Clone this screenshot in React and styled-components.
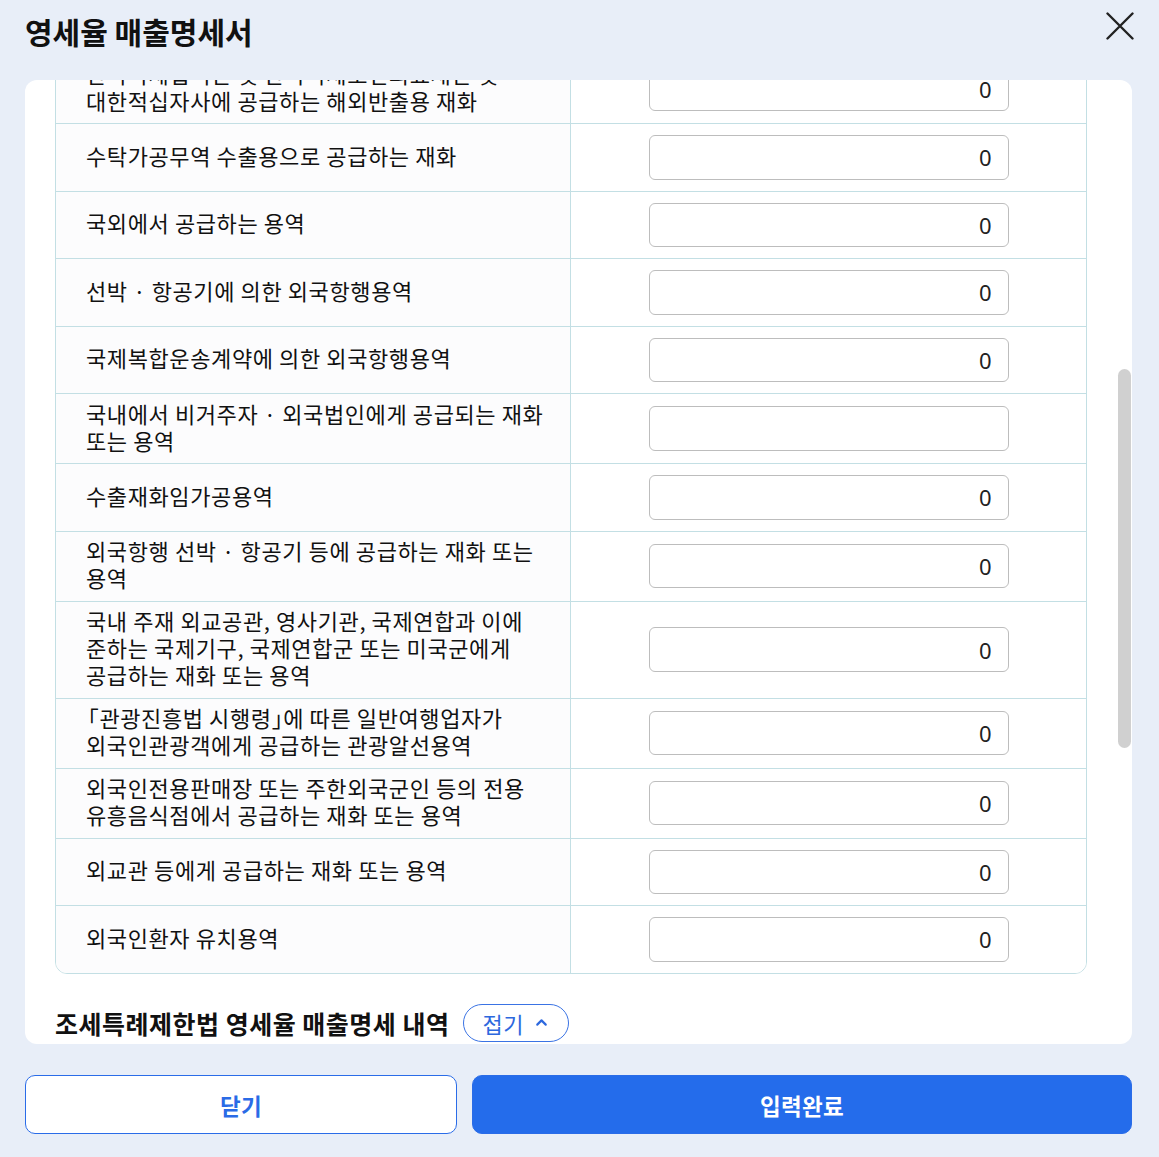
import React, { useLayoutEffect, useRef, useState } from "react";
import styled, { createGlobalStyle } from "styled-components";
import { ChevronUp } from "lucide-react";

const GlobalStyle = createGlobalStyle`
  html, body {
    margin: 0;
    padding: 0;
    height: 100%;
  }
  body {
    background: #e8eef8;
    font-family: "Noto Sans CJK KR", "Noto Sans", sans-serif;
    color: #111;
  }
  * {
    box-sizing: border-box;
  }
`;

const Page = styled.div`
  display: flex;
  flex-direction: column;
  height: 100vh;
`;

const Header = styled.header`
  flex-shrink: 0;
  height: 80px;
  display: flex;
  justify-content: space-between;
  align-items: flex-start;
  padding: 9px 25px 0 25px;
`;

const Title = styled.h1`
  margin: 0;
  font-size: 30px;
  line-height: 44px;
  font-weight: 700;
  color: #111;
`;

const CloseButton = styled.button`
  width: 28px;
  height: 28px;
  margin-top: 3px;
  padding: 0;
  border: none;
  background: none;
  cursor: pointer;
`;

const Panel = styled.main`
  position: relative;
  flex: 1;
  min-height: 0;
  margin: 0 27px 0 25px;
  background: #fff;
  border-radius: 12px;
  overflow: hidden;
`;

const Scroller = styled.div`
  height: 100%;
  overflow-y: auto;
  padding: 30px 45px 53px 30px;
  scrollbar-width: none;
  &::-webkit-scrollbar {
    display: none;
  }
`;

const Thumb = styled.div`
  position: absolute;
  right: 1px;
  width: 13px;
  border-radius: 7px;
  background: #d0d0d0;
`;

const Notice = styled.div`
  margin-bottom: 32px;
  padding: 31px 24px;
  border-radius: 10px;
  background: #f4f6fa;
  font-size: 19px;
  line-height: 28px;
  color: #555;
`;

const Section = styled.section`
  & + & {
    margin-top: 30px;
  }
`;

const SectionHead = styled.div`
  display: flex;
  align-items: center;
  gap: 13px;
  height: 38px;
  margin-bottom: 16px;
`;

const SectionTitle = styled.h2`
  margin: 0;
  font-size: 25px;
  letter-spacing: 0.5px;
  font-weight: 700;
  color: #111;
`;

const FoldButton = styled.button`
  display: inline-flex;
  align-items: center;
  gap: 9px;
  height: 38px;
  padding: 0 18px 0 19px;
  border: 1px solid #3a73e4;
  border-radius: 19px;
  background: #fff;
  color: #2d68de;
  font-family: inherit;
  font-size: 22px;
  letter-spacing: 0.5px;
  cursor: pointer;
`;

const Table = styled.div`
  border: 1px solid #c3dfe4;
  border-radius: 12px;
  overflow: hidden;
`;

const Row = styled.div`
  display: grid;
  grid-template-columns: 515px 1fr;
  & + & {
    border-top: 1px solid #c3dfe4;
  }
`;

const Label = styled.div`
  display: flex;
  align-items: center;
  padding: 5.5px 22px 9.5px 30px;
  border-right: 1px solid #c3dfe4;
  background: ${(p) => (p.$head ? "#f3f8f9" : "#fcfcfd")};
  font-size: 22px;
  letter-spacing: 0.6px;
  line-height: 27px;
  font-weight: ${(p) => (p.$head ? 700 : 400)};
  word-break: keep-all;
  color: #111;
`;

const LabelText = styled.span`
  display: block;
`;

const Bracket = styled.span`
  margin-left: ${(p) => (p.$open ? "-0.42em" : "0")};
  margin-right: ${(p) => (p.$open ? "0" : "-0.5em")};
`;

const ValueCell = styled.div`
  display: flex;
  align-items: center;
  justify-content: center;
  padding: ${(p) => (p.$head ? "7.5px 0" : "11px 0")};
  font-size: 22px;
  line-height: 27px;
  font-weight: 700;
  background: ${(p) => (p.$head ? "#f3f8f9" : "#fff")};
`;

const AmountInput = styled.input`
  width: 360px;
  height: 44.5px;
  padding: 0 16px;
  border: 1px solid #bdbdbd;
  border-radius: 6px;
  background: #fff;
  text-align: right;
  font-family: "Noto Sans", sans-serif;
  font-size: 22px;
  color: #222;
  outline: none;
`;

const Footer = styled.footer`
  flex-shrink: 0;
  display: grid;
  grid-template-columns: 432px 1fr;
  gap: 15px;
  padding: 31px 27px 23px 25px;
`;

const ActionButton = styled.button`
  height: 59px;
  border-radius: 10px;
  border: 1px solid #2a6ce8;
  background: ${(p) => (p.$primary ? "#246ceb" : "#fff")};
  color: ${(p) => (p.$primary ? "#fff" : "#2a6be6")};
  font-family: inherit;
  font-size: 22.5px;
  letter-spacing: 0.3px;
  font-weight: 700;
  cursor: pointer;
`;

const totals = [
  "「부가가치세법」에 따른 영세율 적용 공급실적 합계",
  "「조세특례제한법」에 따른 영세율 적용 공급실적 합계",
];

const vatRows = [
  { label: "직접수출(대행수출 포함)", value: "0" },
  { label: "중계무역 · 위탁판매 · 외국인도 또는 위탁가공무역 방식의 수출", value: "0" },
  { label: "내국신용장 · 구매확인서에 의하여 공급하는 재화", value: "0" },
  { label: "한국국제협력단 및 한국국제보건의료재단 및 대한적십자사에 공급하는 해외반출용 재화", value: "0" },
  { label: "수탁가공무역 수출용으로 공급하는 재화", value: "0", anchor: true },
  { label: "국외에서 공급하는 용역", value: "0" },
  { label: "선박 · 항공기에 의한 외국항행용역", value: "0" },
  { label: "국제복합운송계약에 의한 외국항행용역", value: "0" },
  { label: "국내에서 비거주자 · 외국법인에게 공급되는 재화 또는 용역", value: "" },
  { label: "수출재화임가공용역", value: "0" },
  { label: "외국항행 선박 · 항공기 등에 공급하는 재화 또는 용역", value: "0" },
  { label: "국내 주재 외교공관, 영사기관, 국제연합과 이에 준하는 국제기구, 국제연합군 또는 미국군에게 공급하는 재화 또는 용역", value: "0" },
  { label: "「관광진흥법 시행령」에 따른 일반여행업자가 외국인관광객에게 공급하는 관광알선용역", value: "0" },
  { label: "외국인전용판매장 또는 주한외국군인 등의 전용 유흥음식점에서 공급하는 재화 또는 용역", value: "0" },
  { label: "외교관 등에게 공급하는 재화 또는 용역", value: "0" },
  { label: "외국인환자 유치용역", value: "0" },
];

const specialRows = [
  { label: "방위산업물자 및 비상대비자원 관리법에 따라 지정된 자가 생산 · 공급하는 시제품 및 자원동원으로 공급하는 용역", value: "0" },
  { label: "군부대 등에 공급하는 석유류", value: "0" },
  { label: "도시철도건설용역", value: "0" },
  { label: "국가 · 지방자치단체에 공급하는 사회기반시설 등", value: "0" },
  { label: "장애인용 보장구 및 장애인용 정보통신기기 등", value: "0" },
  { label: "농민 또는 임업종사자에게 공급하는 농업용 · 축산업용 · 임업용 기자재", value: "0" },
  { label: "어민에게 공급하는 어업용 기자재", value: "0" },
  { label: "외국인 관광객 등에게 공급하는 재화", value: "0" },
  { label: "제주특별자치도 면세품판매장에서 판매하거나 제주특별자치도 면세품판매장에 공급하는 물품", value: "0" },
];

// the CJK corner brackets are full-width; pull them in so they sit tight like the design
function renderLabel(text) {
  return text.split(/([「」])/).map((part, i) => {
    if (part === "「") return <Bracket key={i} $open>「</Bracket>;
    if (part === "」") return <Bracket key={i}>」</Bracket>;
    return part;
  });
}

function CloseIcon() {
  return (
    <svg width="28" height="28" viewBox="0 0 28 28" fill="none">
      <path d="M1.5 1.5 L26.5 26.5 M26.5 1.5 L1.5 26.5" stroke="#222" strokeWidth="2.4" strokeLinecap="round" />
    </svg>
  );
}

function AmountRow({ label, value, anchor }) {
  return (
    <Row data-anchor={anchor ? "true" : undefined}>
      <Label>
        <LabelText>{renderLabel(label)}</LabelText>
      </Label>
      <ValueCell>
        <AmountInput type="text" defaultValue={value} />
      </ValueCell>
    </Row>
  );
}

function FoldSection({ title, rows, fold = true, head }) {
  return (
    <Section>
      <SectionHead>
        <SectionTitle>{title}</SectionTitle>
        {fold && (
          <FoldButton type="button">
            접기 <ChevronUp size={17} strokeWidth={3} />
          </FoldButton>
        )}
      </SectionHead>
      <Table>
        {head && (
          <Row>
            <Label $head>구분</Label>
            <ValueCell $head>금액(원)</ValueCell>
          </Row>
        )}
        {rows.map((r) => (
          <AmountRow key={r.label} {...r} />
        ))}
      </Table>
    </Section>
  );
}

export default function App() {
  const scrollerRef = useRef(null);
  const [thumb, setThumb] = useState({ top: 0, height: 0 });

  useLayoutEffect(() => {
    const el = scrollerRef.current;
    const anchor = el.querySelector('[data-anchor="true"]');
    if (anchor) {
      const offset = anchor.getBoundingClientRect().top - el.getBoundingClientRect().top + el.scrollTop;
      el.scrollTop = offset - 43;
    }
    const update = () => {
      const ratio = el.clientHeight / el.scrollHeight;
      setThumb({ top: el.scrollTop * ratio, height: el.clientHeight * ratio });
    };
    update();
    el.addEventListener("scroll", update);
    return () => el.removeEventListener("scroll", update);
  }, []);

  return (
    <>
      <GlobalStyle />
      <Page>
        <Header>
          <Title>영세율 매출명세서</Title>
          <CloseButton type="button" aria-label="닫기">
            <CloseIcon />
          </CloseButton>
        </Header>
        <Panel>
          <Scroller ref={scrollerRef}>
            <Notice>
              영세율이 적용되는 공급가액을 근거 법령별로 입력해 주세요. 입력한 금액은 부가가치세 신고서의
              영세율 과세표준과 일치해야 하며, 해당 사항이 없는 항목은 0으로 두시면 됩니다.
            </Notice>
            <FoldSection
              title="영세율 매출 합계"
              fold={false}
              rows={totals.map((label) => ({ label, value: "0" }))}
            />
            <FoldSection title="부가가치세법 영세율 매출명세 내역" rows={vatRows} head />
            <FoldSection title="조세특례제한법 영세율 매출명세 내역" rows={specialRows} head />
          </Scroller>
          <Thumb style={{ top: thumb.top, height: thumb.height }} />
        </Panel>
        <Footer>
          <ActionButton type="button">닫기</ActionButton>
          <ActionButton type="button" $primary>
            입력완료
          </ActionButton>
        </Footer>
      </Page>
    </>
  );
}
